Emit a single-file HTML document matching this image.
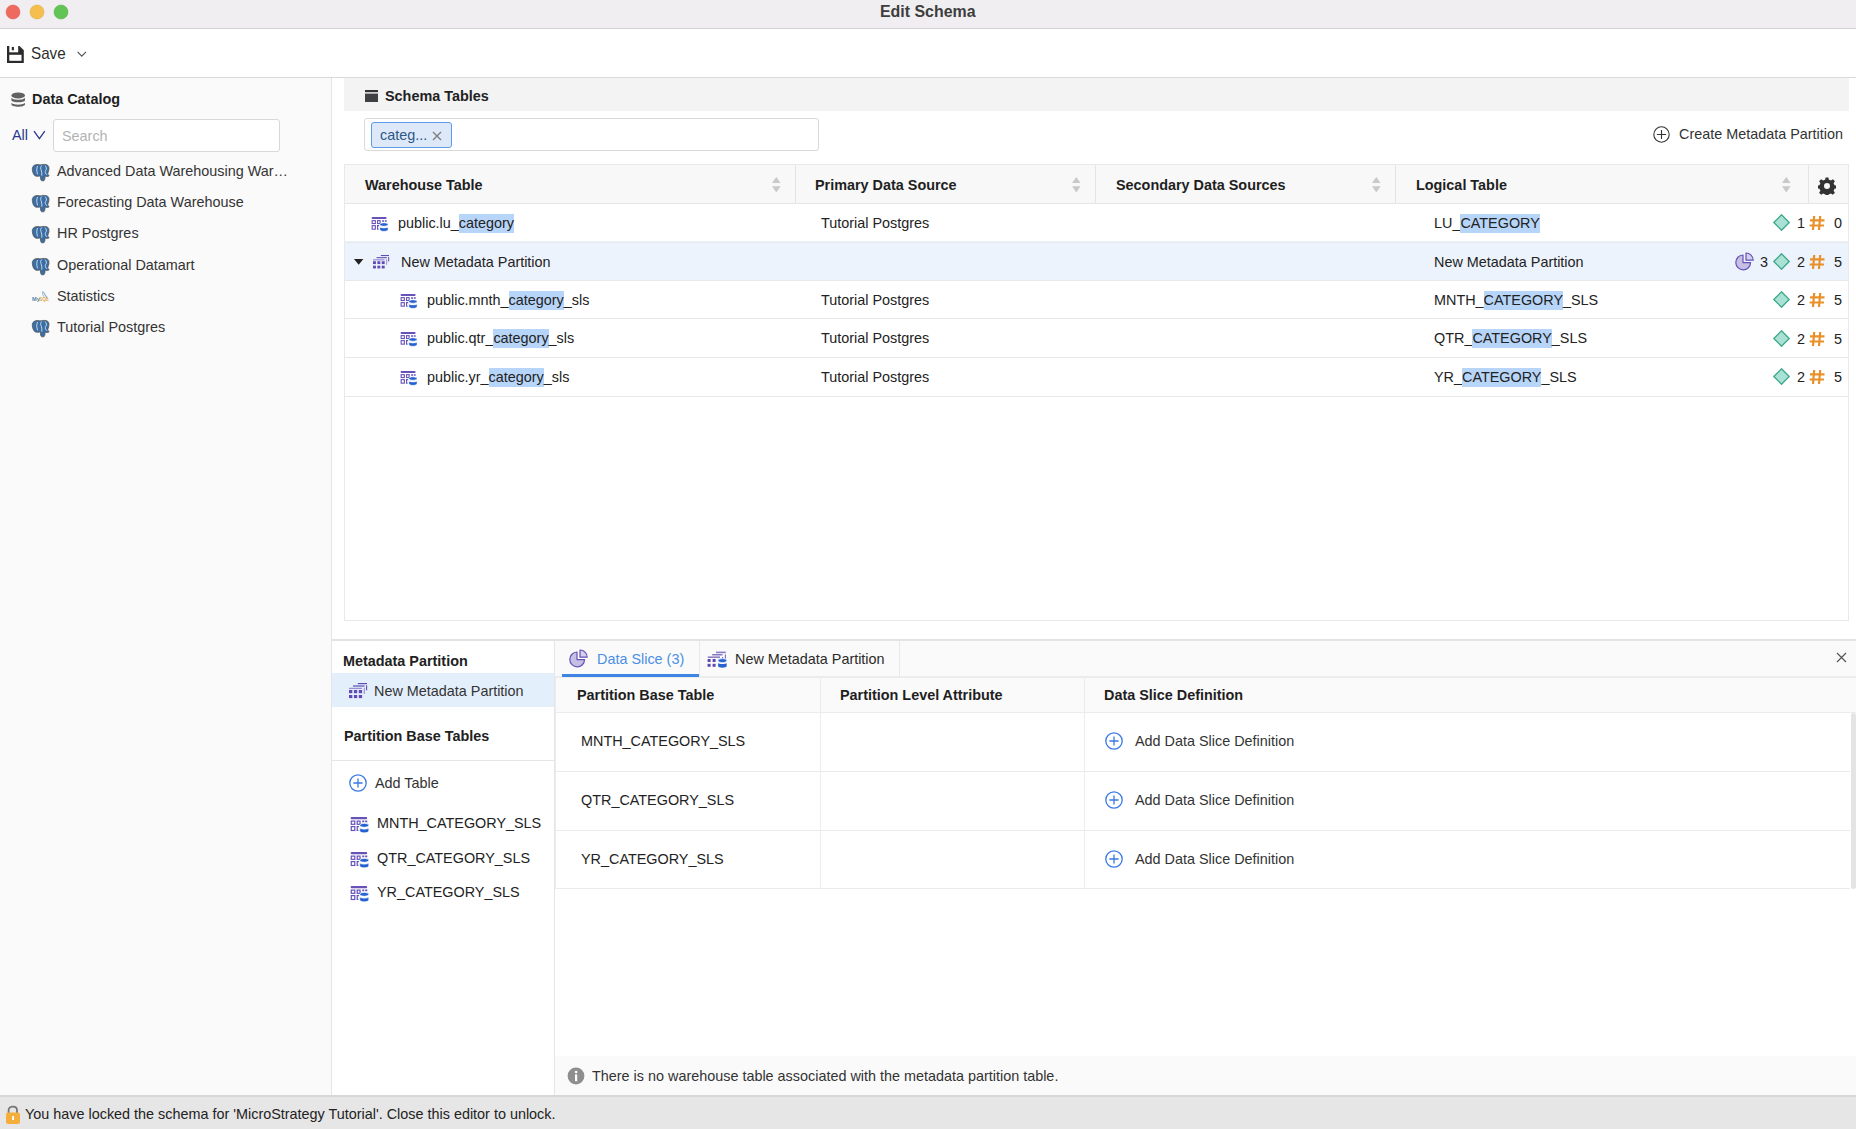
<!DOCTYPE html>
<html><head><meta charset="utf-8"><title>Edit Schema</title>
<style>
html,body{margin:0;padding:0;}
body{width:1856px;height:1129px;position:relative;overflow:hidden;background:#fff;font-family:"Liberation Sans", sans-serif;}
.a{position:absolute;box-sizing:border-box;}
svg.a{overflow:visible}
.t{position:absolute;white-space:nowrap;line-height:20px;font-family:"Liberation Sans", sans-serif;}
</style></head><body>
<div class="a" style="left:0px;top:0px;width:1856px;height:28px;background:#f0eef0;"></div>
<div class="a" style="left:0px;top:28px;width:1856px;height:1px;background:#d3d2d3;"></div>
<svg class="a" style="left:5px;top:4px" width="16" height="16" viewBox="0 0 16 16"><circle cx="8" cy="8" r="7" fill="#ee6a5f" stroke="#e0564b" stroke-width="0.5"/></svg>
<svg class="a" style="left:29px;top:4px" width="16" height="16" viewBox="0 0 16 16"><circle cx="8" cy="8" r="7" fill="#f5bf4f" stroke="#dea337" stroke-width="0.5"/></svg>
<svg class="a" style="left:53px;top:4px" width="16" height="16" viewBox="0 0 16 16"><circle cx="8" cy="8" r="7" fill="#61c454" stroke="#4eaa42" stroke-width="0.5"/></svg>
<div class="t" style="left:880px;top:1px;font-size:17.4px;font-weight:700;color:#3d3d3d;transform:scaleX(0.915);transform-origin:0 0;">Edit Schema</div>
<div class="a" style="left:0px;top:29px;width:1856px;height:48px;background:#ffffff;"></div>
<div class="a" style="left:0px;top:77px;width:1856px;height:1px;background:#d9d9d9;"></div>
<svg class="a" style="left:7px;top:45.5px" width="17" height="17" viewBox="0 0 17 17"><path d="M0 0 H12.5 L16.8 4.2 V16.9 H0 Z" fill="#2b2b2b"/><rect x="2.3" y="0" width="8.9" height="6.3" fill="#fff"/><rect x="4.8" y="0.9" width="2.1" height="3.4" fill="#2b2b2b"/><rect x="2.3" y="8.8" width="12.2" height="6" fill="#fff"/></svg>
<div class="t" style="left:31px;top:44px;font-size:17px;color:#2e2e2e;transform:scaleX(0.895);transform-origin:0 0;">Save</div>
<svg class="a" style="left:77px;top:51px" width="10" height="7" viewBox="0 0 10 7"><path d="M0.6 0.8 L4.8 5.2 L9 0.8" fill="none" stroke="#555" stroke-width="1.2"/></svg>
<div class="a" style="left:0px;top:78px;width:331px;height:1017px;background:#fafafa;"></div>
<div class="a" style="left:331px;top:78px;width:2px;height:1017px;background:#e4e4e4;"></div>
<svg class="a" style="left:10.5px;top:92px" width="15" height="16" viewBox="0 0 15 16"><g fill="#626262"><ellipse cx="7.2" cy="3.4" rx="6.8" ry="3"/><path d="M0.4 5.6 C1 8.6 13.4 8.6 14 5.6 V8.2 C13.4 11 1 11 0.4 8.2 Z"/><path d="M0.4 10.6 C1 13.4 13.4 13.4 14 10.6 V12.6 C13.4 15.6 1 15.6 0.4 12.6 Z"/></g></svg>
<div class="t" style="left:32px;top:89px;font-size:14.4px;font-weight:700;color:#1e1e1e;">Data Catalog</div>
<div class="t" style="left:12px;top:125px;font-size:14.4px;color:#2b378f;">All</div>
<svg class="a" style="left:33px;top:130px" width="13" height="10" viewBox="0 0 13 10"><path d="M1 1.2 L6.4 8.6 L11.8 1.2" fill="none" stroke="#2b378f" stroke-width="1.3"/></svg>
<div class="a" style="left:53px;top:119px;width:227px;height:33px;background:#fff;border:1px solid #d8d8d8;border-radius:3px"></div>
<div class="t" style="left:62px;top:126px;font-size:14.4px;color:#b3b3b3;">Search</div>
<svg class="a" style="left:32px;top:164px" width="18" height="18" viewBox="0 0 18 18"><path d="M1 2.4 C2.4 0.6 5.4 0.2 8 0.9 C9.6 0.4 12.4 0.2 14.6 0.7 C16.6 1.3 17.3 3.2 16.9 5.6 C16.6 7.6 15.8 9 15.6 10.2 C16.4 10.6 17.2 11 16.8 12 C16.2 12.8 14.8 12.6 13.2 12 C13 13.8 12.9 15.6 12.2 16.4 C11.4 17.1 9.6 17 9 16.2 C8.4 15.2 8.6 13.2 8.4 11.8 C6.8 12.4 4.6 12.6 3 11.8 C1.4 10.8 0.4 7.6 0.3 5.2 C0.2 4 0.4 3.2 1 2.4 Z" fill="#3a6ea5" stroke="#555" stroke-width="0.8"/><path d="M5.6 2 C4.6 4 4.4 7 5.6 10.4 M9.8 1.4 C8.6 2.4 8.4 4.2 9 5.6 C9.6 7 10 9.4 9.8 11.6 M12.8 1.6 C14.6 2.6 15 5 13.6 6.6 C12.8 7.6 13.4 9.6 14.8 10.8" fill="none" stroke="#fff" stroke-width="0.85" opacity=".85"/></svg>
<div class="t" style="left:57px;top:161px;font-size:14.4px;color:#333;">Advanced Data Warehousing War…</div>
<svg class="a" style="left:32px;top:195px" width="18" height="18" viewBox="0 0 18 18"><path d="M1 2.4 C2.4 0.6 5.4 0.2 8 0.9 C9.6 0.4 12.4 0.2 14.6 0.7 C16.6 1.3 17.3 3.2 16.9 5.6 C16.6 7.6 15.8 9 15.6 10.2 C16.4 10.6 17.2 11 16.8 12 C16.2 12.8 14.8 12.6 13.2 12 C13 13.8 12.9 15.6 12.2 16.4 C11.4 17.1 9.6 17 9 16.2 C8.4 15.2 8.6 13.2 8.4 11.8 C6.8 12.4 4.6 12.6 3 11.8 C1.4 10.8 0.4 7.6 0.3 5.2 C0.2 4 0.4 3.2 1 2.4 Z" fill="#3a6ea5" stroke="#555" stroke-width="0.8"/><path d="M5.6 2 C4.6 4 4.4 7 5.6 10.4 M9.8 1.4 C8.6 2.4 8.4 4.2 9 5.6 C9.6 7 10 9.4 9.8 11.6 M12.8 1.6 C14.6 2.6 15 5 13.6 6.6 C12.8 7.6 13.4 9.6 14.8 10.8" fill="none" stroke="#fff" stroke-width="0.85" opacity=".85"/></svg>
<div class="t" style="left:57px;top:192px;font-size:14.4px;color:#333;">Forecasting Data Warehouse</div>
<svg class="a" style="left:32px;top:226px" width="18" height="18" viewBox="0 0 18 18"><path d="M1 2.4 C2.4 0.6 5.4 0.2 8 0.9 C9.6 0.4 12.4 0.2 14.6 0.7 C16.6 1.3 17.3 3.2 16.9 5.6 C16.6 7.6 15.8 9 15.6 10.2 C16.4 10.6 17.2 11 16.8 12 C16.2 12.8 14.8 12.6 13.2 12 C13 13.8 12.9 15.6 12.2 16.4 C11.4 17.1 9.6 17 9 16.2 C8.4 15.2 8.6 13.2 8.4 11.8 C6.8 12.4 4.6 12.6 3 11.8 C1.4 10.8 0.4 7.6 0.3 5.2 C0.2 4 0.4 3.2 1 2.4 Z" fill="#3a6ea5" stroke="#555" stroke-width="0.8"/><path d="M5.6 2 C4.6 4 4.4 7 5.6 10.4 M9.8 1.4 C8.6 2.4 8.4 4.2 9 5.6 C9.6 7 10 9.4 9.8 11.6 M12.8 1.6 C14.6 2.6 15 5 13.6 6.6 C12.8 7.6 13.4 9.6 14.8 10.8" fill="none" stroke="#fff" stroke-width="0.85" opacity=".85"/></svg>
<div class="t" style="left:57px;top:223px;font-size:14.4px;color:#333;">HR Postgres</div>
<svg class="a" style="left:32px;top:258px" width="18" height="18" viewBox="0 0 18 18"><path d="M1 2.4 C2.4 0.6 5.4 0.2 8 0.9 C9.6 0.4 12.4 0.2 14.6 0.7 C16.6 1.3 17.3 3.2 16.9 5.6 C16.6 7.6 15.8 9 15.6 10.2 C16.4 10.6 17.2 11 16.8 12 C16.2 12.8 14.8 12.6 13.2 12 C13 13.8 12.9 15.6 12.2 16.4 C11.4 17.1 9.6 17 9 16.2 C8.4 15.2 8.6 13.2 8.4 11.8 C6.8 12.4 4.6 12.6 3 11.8 C1.4 10.8 0.4 7.6 0.3 5.2 C0.2 4 0.4 3.2 1 2.4 Z" fill="#3a6ea5" stroke="#555" stroke-width="0.8"/><path d="M5.6 2 C4.6 4 4.4 7 5.6 10.4 M9.8 1.4 C8.6 2.4 8.4 4.2 9 5.6 C9.6 7 10 9.4 9.8 11.6 M12.8 1.6 C14.6 2.6 15 5 13.6 6.6 C12.8 7.6 13.4 9.6 14.8 10.8" fill="none" stroke="#fff" stroke-width="0.85" opacity=".85"/></svg>
<div class="t" style="left:57px;top:255px;font-size:14.4px;color:#333;">Operational Datamart</div>
<svg class="a" style="left:31px;top:290px" width="19" height="14" viewBox="0 0 19 14"><path d="M11 2 C12 1.6 13.2 2.6 13.6 4 C14.2 5.6 15.4 7 16.4 8 C16.8 8.4 17 8.8 16.6 9" fill="none" stroke="#8fb0cc" stroke-width="1.1"/><path d="M11.6 2.4 C11.6 4 12 5.6 12.8 6.8" fill="none" stroke="#9ab8d2" stroke-width="1"/><text x="1" y="11.4" font-family="Liberation Sans" font-size="5.6" font-weight="700" fill="#4f86b0">My</text><text x="8" y="11.2" font-family="Liberation Sans" font-size="4.8" font-weight="700" fill="#e4a647">SQL</text></svg>
<div class="t" style="left:57px;top:286px;font-size:14.4px;color:#333;">Statistics</div>
<svg class="a" style="left:32px;top:320px" width="18" height="18" viewBox="0 0 18 18"><path d="M1 2.4 C2.4 0.6 5.4 0.2 8 0.9 C9.6 0.4 12.4 0.2 14.6 0.7 C16.6 1.3 17.3 3.2 16.9 5.6 C16.6 7.6 15.8 9 15.6 10.2 C16.4 10.6 17.2 11 16.8 12 C16.2 12.8 14.8 12.6 13.2 12 C13 13.8 12.9 15.6 12.2 16.4 C11.4 17.1 9.6 17 9 16.2 C8.4 15.2 8.6 13.2 8.4 11.8 C6.8 12.4 4.6 12.6 3 11.8 C1.4 10.8 0.4 7.6 0.3 5.2 C0.2 4 0.4 3.2 1 2.4 Z" fill="#3a6ea5" stroke="#555" stroke-width="0.8"/><path d="M5.6 2 C4.6 4 4.4 7 5.6 10.4 M9.8 1.4 C8.6 2.4 8.4 4.2 9 5.6 C9.6 7 10 9.4 9.8 11.6 M12.8 1.6 C14.6 2.6 15 5 13.6 6.6 C12.8 7.6 13.4 9.6 14.8 10.8" fill="none" stroke="#fff" stroke-width="0.85" opacity=".85"/></svg>
<div class="t" style="left:57px;top:317px;font-size:14.4px;color:#333;">Tutorial Postgres</div>
<div class="a" style="left:332px;top:78px;width:1524px;height:561px;background:#ffffff;"></div>
<div class="a" style="left:344px;top:78px;width:1505px;height:33px;background:#f3f3f3;"></div>
<svg class="a" style="left:365px;top:90px" width="13" height="12" viewBox="0 0 13 12"><rect x="0" y="0" width="13" height="2.2" fill="#333"/><rect x="0" y="3.6" width="13" height="8.4" fill="#3f4044"/></svg>
<div class="t" style="left:385px;top:86px;font-size:14.4px;font-weight:700;color:#222;">Schema Tables</div>
<div class="a" style="left:364px;top:118px;width:455px;height:33px;background:#fff;border:1px solid #d9d9d9;border-radius:3px"></div>
<div class="a" style="left:371px;top:122px;width:81px;height:26px;background:#dde9f8;border:1.5px solid #5b9be8;border-radius:3px"></div>
<div class="t" style="left:380px;top:125px;font-size:14.4px;color:#2e5687;">categ...</div>
<svg class="a" style="left:432px;top:131px" width="10" height="10" viewBox="0 0 10 10"><path d="M1 1 L9 9 M9 1 L1 9" stroke="#7a7a7a" stroke-width="1.2"/></svg>
<svg class="a" style="left:1653px;top:126px" width="17" height="17" viewBox="0 0 17 17"><circle cx="8.5" cy="8.5" r="7.7" fill="none" stroke="#333" stroke-width="1.1"/><path d="M8.5 3.9000000000000004 V13.1 M3.9000000000000004 8.5 H13.1" stroke="#333" stroke-width="1.1"/></svg>
<div class="t" style="left:1679px;top:124px;font-size:14.4px;color:#333;">Create Metadata Partition</div>
<div class="a" style="left:344px;top:164px;width:1505px;height:457px;border:1px solid #e9e9e9;background:#fff"></div>
<div class="a" style="left:345px;top:165px;width:1503px;height:38px;background:#f8f8f8;"></div>
<div class="a" style="left:345px;top:203px;width:1503px;height:1px;background:#e6e6e6;"></div>
<div class="a" style="left:795px;top:165px;width:1px;height:38px;background:#e4e4e4;"></div>
<div class="a" style="left:1095px;top:165px;width:1px;height:38px;background:#e4e4e4;"></div>
<div class="a" style="left:1395px;top:165px;width:1px;height:38px;background:#e4e4e4;"></div>
<div class="a" style="left:1808px;top:165px;width:1px;height:38px;background:#e4e4e4;"></div>
<div class="t" style="left:365px;top:175px;font-size:14.4px;font-weight:700;color:#1f1f1f;">Warehouse Table</div>
<div class="t" style="left:815px;top:175px;font-size:14.4px;font-weight:700;color:#1f1f1f;">Primary Data Source</div>
<div class="t" style="left:1116px;top:175px;font-size:14.4px;font-weight:700;color:#1f1f1f;">Secondary Data Sources</div>
<div class="t" style="left:1416px;top:175px;font-size:14.4px;font-weight:700;color:#1f1f1f;">Logical Table</div>
<svg class="a" style="left:771.7px;top:177px" width="9" height="16" viewBox="0 0 9 16"><path d="M4.3 0 L8.6 6 H0 Z M0 9.2 H8.6 L4.3 15.6 Z" fill="#c9c9c9"/></svg>
<svg class="a" style="left:1071.7px;top:177px" width="9" height="16" viewBox="0 0 9 16"><path d="M4.3 0 L8.6 6 H0 Z M0 9.2 H8.6 L4.3 15.6 Z" fill="#c9c9c9"/></svg>
<svg class="a" style="left:1371.7px;top:177px" width="9" height="16" viewBox="0 0 9 16"><path d="M4.3 0 L8.6 6 H0 Z M0 9.2 H8.6 L4.3 15.6 Z" fill="#c9c9c9"/></svg>
<svg class="a" style="left:1781.7px;top:177px" width="9" height="16" viewBox="0 0 9 16"><path d="M4.3 0 L8.6 6 H0 Z M0 9.2 H8.6 L4.3 15.6 Z" fill="#c9c9c9"/></svg>
<svg class="a" style="left:1818px;top:177px" width="18" height="18" viewBox="0 0 18 18"><path fill="#333" d="M7.6 0.4 H10.4 L10.9 2.7 C11.6 2.9 12.3 3.2 12.9 3.6 L14.9 2.3 L16.9 4.3 L15.6 6.3 C16 6.9 16.3 7.6 16.5 8.3 L18 8.6 V11.4 L16.5 11.7 C16.3 12.4 16 13.1 15.6 13.7 L16.9 15.7 L14.9 17.7 L12.9 16.4 C12.3 16.8 11.6 17.1 10.9 17.3 L10.4 18 H7.6 L7.1 17.3 C6.4 17.1 5.7 16.8 5.1 16.4 L3.1 17.7 L1.1 15.7 L2.4 13.7 C2 13.1 1.7 12.4 1.5 11.7 L0 11.4 V8.6 L1.5 8.3 C1.7 7.6 2 6.9 2.4 6.3 L1.1 4.3 L3.1 2.3 L5.1 3.6 C5.7 3.2 6.4 2.9 7.1 2.7 Z M9 6 A3 3 0 1 0 9 12 A3 3 0 1 0 9 6 Z"/></svg>
<div class="a" style="left:345px;top:241px;width:1503px;height:39px;background:#edf3fc;"></div>
<div class="a" style="left:345px;top:242px;width:1503px;height:1px;background:#e8e8e8;"></div>
<div class="a" style="left:345px;top:280px;width:1503px;height:1px;background:#e8e8e8;"></div>
<div class="a" style="left:345px;top:318px;width:1503px;height:1px;background:#e8e8e8;"></div>
<div class="a" style="left:345px;top:357px;width:1503px;height:1px;background:#e8e8e8;"></div>
<div class="a" style="left:345px;top:396px;width:1503px;height:1px;background:#e8e8e8;"></div>
<svg class="a" style="left:371px;top:216px" width="18" height="16" viewBox="0 0 18 16"><g transform="scale(1.0)"><rect x="0.6" y="1" width="15" height="1.9" rx="0.9" fill="#6652b9"/><g fill="none" stroke="#6652b9" stroke-width="1.1"><rect x="1.15" y="4.65" width="3.2" height="2.9"/><rect x="6.55" y="4.65" width="2.6" height="2.9"/><rect x="1.15" y="9.65" width="3.2" height="3.5"/><path d="M8.2 9.65 H6.55 V13.15 H7.6"/></g><path d="M11.1 4.9 H13 M13.8 4.9 H15.7" stroke="#6652b9" stroke-width="1.5"/><ellipse cx="12.95" cy="8.5" rx="4.1" ry="1.8" fill="#2261cf" stroke="#fff" stroke-width="0.7"/><path d="M8.85 10.9 C9.4 12.3 16.5 12.3 17.05 10.9 V13.5 C17.05 15.9 8.85 15.9 8.85 13.5 Z" fill="#2261cf" stroke="#fff" stroke-width="0.5"/></g></svg>
<div class="t" style="left:398px;top:213px;font-size:14.4px;color:#222;">public.lu_<span style="background:#b7d5f8;box-shadow:0 2px 0 #b7d5f8,0 -1px 0 #b7d5f8">category</span></div>
<div class="t" style="left:821px;top:213px;font-size:14.4px;color:#222;">Tutorial Postgres</div>
<div class="t" style="left:1434px;top:213px;font-size:14.4px;color:#222;">LU_<span style="background:#b7d5f8;box-shadow:0 2px 0 #b7d5f8,0 -1px 0 #b7d5f8">CATEGORY</span></div>
<svg class="a" style="left:354px;top:259px" width="10" height="6" viewBox="0 0 10 6"><path d="M0 0 H9.4 L4.7 5.8 Z" fill="#222"/></svg>
<svg class="a" style="left:373px;top:255.3px" width="18" height="16" viewBox="0 0 18 16"><g transform="scale(0.89)"><path d="M8.8 0.6 H18" stroke="#5f4bb3" stroke-width="1.2"/><path d="M4 3 H15.6" stroke="#5f4bb3" stroke-width="1.2"/><path d="M0 5.4 H13" stroke="#9a8cd2" stroke-width="1.3"/><path d="M17.6 2.2 V7.2" stroke="#5f4bb3" stroke-width="1.1"/><path d="M15.3 4.8 V11" stroke="#9a8cd2" stroke-width="1.1"/><g fill="#5f4bb3"><rect x="0" y="7" width="3.3" height="3.2"/><rect x="4.9" y="7" width="3.3" height="3.2"/><rect x="9.8" y="7" width="3.3" height="3.2"/><rect x="0" y="12" width="3.3" height="3.1"/><rect x="4.9" y="12" width="3.3" height="3.1"/><rect x="9.8" y="12" width="3.3" height="3.1"/></g></g></svg>
<div class="t" style="left:401px;top:252px;font-size:14.4px;color:#222;">New Metadata Partition</div>
<div class="t" style="left:1434px;top:252px;font-size:14.4px;color:#222;">New Metadata Partition</div>
<svg class="a" style="left:400px;top:293px" width="18" height="16" viewBox="0 0 18 16"><g transform="scale(1.0)"><rect x="0.6" y="1" width="15" height="1.9" rx="0.9" fill="#6652b9"/><g fill="none" stroke="#6652b9" stroke-width="1.1"><rect x="1.15" y="4.65" width="3.2" height="2.9"/><rect x="6.55" y="4.65" width="2.6" height="2.9"/><rect x="1.15" y="9.65" width="3.2" height="3.5"/><path d="M8.2 9.65 H6.55 V13.15 H7.6"/></g><path d="M11.1 4.9 H13 M13.8 4.9 H15.7" stroke="#6652b9" stroke-width="1.5"/><ellipse cx="12.95" cy="8.5" rx="4.1" ry="1.8" fill="#2261cf" stroke="#fff" stroke-width="0.7"/><path d="M8.85 10.9 C9.4 12.3 16.5 12.3 17.05 10.9 V13.5 C17.05 15.9 8.85 15.9 8.85 13.5 Z" fill="#2261cf" stroke="#fff" stroke-width="0.5"/></g></svg>
<div class="t" style="left:427px;top:290px;font-size:14.4px;color:#222;">public.mnth_<span style="background:#b7d5f8;box-shadow:0 2px 0 #b7d5f8,0 -1px 0 #b7d5f8">category</span>_sls</div>
<div class="t" style="left:821px;top:290px;font-size:14.4px;color:#222;">Tutorial Postgres</div>
<div class="t" style="left:1434px;top:290px;font-size:14.4px;color:#222;">MNTH_<span style="background:#b7d5f8;box-shadow:0 2px 0 #b7d5f8,0 -1px 0 #b7d5f8">CATEGORY</span>_SLS</div>
<svg class="a" style="left:400px;top:331px" width="18" height="16" viewBox="0 0 18 16"><g transform="scale(1.0)"><rect x="0.6" y="1" width="15" height="1.9" rx="0.9" fill="#6652b9"/><g fill="none" stroke="#6652b9" stroke-width="1.1"><rect x="1.15" y="4.65" width="3.2" height="2.9"/><rect x="6.55" y="4.65" width="2.6" height="2.9"/><rect x="1.15" y="9.65" width="3.2" height="3.5"/><path d="M8.2 9.65 H6.55 V13.15 H7.6"/></g><path d="M11.1 4.9 H13 M13.8 4.9 H15.7" stroke="#6652b9" stroke-width="1.5"/><ellipse cx="12.95" cy="8.5" rx="4.1" ry="1.8" fill="#2261cf" stroke="#fff" stroke-width="0.7"/><path d="M8.85 10.9 C9.4 12.3 16.5 12.3 17.05 10.9 V13.5 C17.05 15.9 8.85 15.9 8.85 13.5 Z" fill="#2261cf" stroke="#fff" stroke-width="0.5"/></g></svg>
<div class="t" style="left:427px;top:328px;font-size:14.4px;color:#222;">public.qtr_<span style="background:#b7d5f8;box-shadow:0 2px 0 #b7d5f8,0 -1px 0 #b7d5f8">category</span>_sls</div>
<div class="t" style="left:821px;top:328px;font-size:14.4px;color:#222;">Tutorial Postgres</div>
<div class="t" style="left:1434px;top:328px;font-size:14.4px;color:#222;">QTR_<span style="background:#b7d5f8;box-shadow:0 2px 0 #b7d5f8,0 -1px 0 #b7d5f8">CATEGORY</span>_SLS</div>
<svg class="a" style="left:400px;top:370px" width="18" height="16" viewBox="0 0 18 16"><g transform="scale(1.0)"><rect x="0.6" y="1" width="15" height="1.9" rx="0.9" fill="#6652b9"/><g fill="none" stroke="#6652b9" stroke-width="1.1"><rect x="1.15" y="4.65" width="3.2" height="2.9"/><rect x="6.55" y="4.65" width="2.6" height="2.9"/><rect x="1.15" y="9.65" width="3.2" height="3.5"/><path d="M8.2 9.65 H6.55 V13.15 H7.6"/></g><path d="M11.1 4.9 H13 M13.8 4.9 H15.7" stroke="#6652b9" stroke-width="1.5"/><ellipse cx="12.95" cy="8.5" rx="4.1" ry="1.8" fill="#2261cf" stroke="#fff" stroke-width="0.7"/><path d="M8.85 10.9 C9.4 12.3 16.5 12.3 17.05 10.9 V13.5 C17.05 15.9 8.85 15.9 8.85 13.5 Z" fill="#2261cf" stroke="#fff" stroke-width="0.5"/></g></svg>
<div class="t" style="left:427px;top:367px;font-size:14.4px;color:#222;">public.yr_<span style="background:#b7d5f8;box-shadow:0 2px 0 #b7d5f8,0 -1px 0 #b7d5f8">category</span>_sls</div>
<div class="t" style="left:821px;top:367px;font-size:14.4px;color:#222;">Tutorial Postgres</div>
<div class="t" style="left:1434px;top:367px;font-size:14.4px;color:#222;">YR_<span style="background:#b7d5f8;box-shadow:0 2px 0 #b7d5f8,0 -1px 0 #b7d5f8">CATEGORY</span>_SLS</div>
<svg class="a" style="left:1773px;top:214px" width="17" height="17" viewBox="0 0 17 17"><path d="M8.5 0.8 L16.2 8.5 L8.5 16.2 L0.8 8.5 Z" fill="#a9e1d5" stroke="#3ea88b" stroke-width="1.3" stroke-linejoin="round"/></svg>
<div class="t" style="left:1797px;top:213px;font-size:14.4px;color:#222;">1</div>
<svg class="a" style="left:1809px;top:215px" width="16" height="16" viewBox="0 0 16 16"><g stroke="#e8912a" stroke-width="2.2" stroke-linecap="butt"><path d="M5.2 1 L4 15 M11.2 1 L10 15 M1 5.3 H15.5 M0.6 10.5 H15"/></g></svg>
<div class="t" style="left:1834px;top:213px;font-size:14.4px;color:#222;">0</div>
<svg class="a" style="left:1773px;top:253px" width="17" height="17" viewBox="0 0 17 17"><path d="M8.5 0.8 L16.2 8.5 L8.5 16.2 L0.8 8.5 Z" fill="#a9e1d5" stroke="#3ea88b" stroke-width="1.3" stroke-linejoin="round"/></svg>
<div class="t" style="left:1797px;top:252px;font-size:14.4px;color:#222;">2</div>
<svg class="a" style="left:1809px;top:254px" width="16" height="16" viewBox="0 0 16 16"><g stroke="#e8912a" stroke-width="2.2" stroke-linecap="butt"><path d="M5.2 1 L4 15 M11.2 1 L10 15 M1 5.3 H15.5 M0.6 10.5 H15"/></g></svg>
<div class="t" style="left:1834px;top:252px;font-size:14.4px;color:#222;">5</div>
<svg class="a" style="left:1773px;top:291px" width="17" height="17" viewBox="0 0 17 17"><path d="M8.5 0.8 L16.2 8.5 L8.5 16.2 L0.8 8.5 Z" fill="#a9e1d5" stroke="#3ea88b" stroke-width="1.3" stroke-linejoin="round"/></svg>
<div class="t" style="left:1797px;top:290px;font-size:14.4px;color:#222;">2</div>
<svg class="a" style="left:1809px;top:292px" width="16" height="16" viewBox="0 0 16 16"><g stroke="#e8912a" stroke-width="2.2" stroke-linecap="butt"><path d="M5.2 1 L4 15 M11.2 1 L10 15 M1 5.3 H15.5 M0.6 10.5 H15"/></g></svg>
<div class="t" style="left:1834px;top:290px;font-size:14.4px;color:#222;">5</div>
<svg class="a" style="left:1773px;top:330px" width="17" height="17" viewBox="0 0 17 17"><path d="M8.5 0.8 L16.2 8.5 L8.5 16.2 L0.8 8.5 Z" fill="#a9e1d5" stroke="#3ea88b" stroke-width="1.3" stroke-linejoin="round"/></svg>
<div class="t" style="left:1797px;top:329px;font-size:14.4px;color:#222;">2</div>
<svg class="a" style="left:1809px;top:331px" width="16" height="16" viewBox="0 0 16 16"><g stroke="#e8912a" stroke-width="2.2" stroke-linecap="butt"><path d="M5.2 1 L4 15 M11.2 1 L10 15 M1 5.3 H15.5 M0.6 10.5 H15"/></g></svg>
<div class="t" style="left:1834px;top:329px;font-size:14.4px;color:#222;">5</div>
<svg class="a" style="left:1773px;top:368px" width="17" height="17" viewBox="0 0 17 17"><path d="M8.5 0.8 L16.2 8.5 L8.5 16.2 L0.8 8.5 Z" fill="#a9e1d5" stroke="#3ea88b" stroke-width="1.3" stroke-linejoin="round"/></svg>
<div class="t" style="left:1797px;top:367px;font-size:14.4px;color:#222;">2</div>
<svg class="a" style="left:1809px;top:369px" width="16" height="16" viewBox="0 0 16 16"><g stroke="#e8912a" stroke-width="2.2" stroke-linecap="butt"><path d="M5.2 1 L4 15 M11.2 1 L10 15 M1 5.3 H15.5 M0.6 10.5 H15"/></g></svg>
<div class="t" style="left:1834px;top:367px;font-size:14.4px;color:#222;">5</div>
<svg class="a" style="left:1735px;top:252px" width="20" height="20" viewBox="0 0 20 20"><path d="M8 3 A7.4 7.4 0 1 0 15.6 10.6 H8 Z" fill="#c6bfe4" stroke="#6552b6" stroke-width="1.2" stroke-linejoin="round"/><path d="M11 1 A7.3 7.3 0 0 1 18.2 8.2 H11 Z" fill="#d6d0ee" stroke="#6552b6" stroke-width="1.2" stroke-linejoin="round"/></svg>
<div class="t" style="left:1760px;top:252px;font-size:14.4px;color:#222;">3</div>
<div class="a" style="left:332px;top:639px;width:1524px;height:2px;background:#e3e3e3;"></div>
<div class="a" style="left:332px;top:641px;width:222px;height:454px;background:#ffffff;"></div>
<div class="a" style="left:554px;top:641px;width:1px;height:454px;background:#e6e6e6;"></div>
<div class="t" style="left:343px;top:651px;font-size:14.4px;font-weight:700;color:#222;">Metadata Partition</div>
<div class="a" style="left:332px;top:673px;width:222px;height:34px;background:#e4effc;"></div>
<svg class="a" style="left:349px;top:683px" width="18" height="16" viewBox="0 0 18 16"><g transform="scale(1.0)"><path d="M8.8 0.6 H18" stroke="#5f4bb3" stroke-width="1.2"/><path d="M4 3 H15.6" stroke="#5f4bb3" stroke-width="1.2"/><path d="M0 5.4 H13" stroke="#9a8cd2" stroke-width="1.3"/><path d="M17.6 2.2 V7.2" stroke="#5f4bb3" stroke-width="1.1"/><path d="M15.3 4.8 V11" stroke="#9a8cd2" stroke-width="1.1"/><g fill="#5f4bb3"><rect x="0" y="7" width="3.3" height="3.2"/><rect x="4.9" y="7" width="3.3" height="3.2"/><rect x="9.8" y="7" width="3.3" height="3.2"/><rect x="0" y="12" width="3.3" height="3.1"/><rect x="4.9" y="12" width="3.3" height="3.1"/><rect x="9.8" y="12" width="3.3" height="3.1"/></g></g></svg>
<div class="t" style="left:374px;top:681px;font-size:14.4px;color:#333;">New Metadata Partition</div>
<div class="t" style="left:344px;top:726px;font-size:14.4px;font-weight:700;color:#222;">Partition Base Tables</div>
<div class="a" style="left:332px;top:760px;width:222px;height:1px;background:#e6e6e6;"></div>
<svg class="a" style="left:349px;top:774px" width="18" height="18" viewBox="0 0 18 18"><circle cx="9.0" cy="9.0" r="8.2" fill="none" stroke="#3a78e6" stroke-width="1.3"/><path d="M9.0 4.4 V13.6 M4.4 9.0 H13.6" stroke="#3a78e6" stroke-width="1.3"/></svg>
<div class="t" style="left:375px;top:773px;font-size:14.4px;color:#333;">Add Table</div>
<svg class="a" style="left:350px;top:816px" width="18" height="16" viewBox="0 0 18 16"><g transform="scale(1.1)"><rect x="0.6" y="1" width="15" height="1.9" rx="0.9" fill="#6652b9"/><g fill="none" stroke="#6652b9" stroke-width="1.1"><rect x="1.15" y="4.65" width="3.2" height="2.9"/><rect x="6.55" y="4.65" width="2.6" height="2.9"/><rect x="1.15" y="9.65" width="3.2" height="3.5"/><path d="M8.2 9.65 H6.55 V13.15 H7.6"/></g><path d="M11.1 4.9 H13 M13.8 4.9 H15.7" stroke="#6652b9" stroke-width="1.5"/><ellipse cx="12.95" cy="8.5" rx="4.1" ry="1.8" fill="#2261cf" stroke="#fff" stroke-width="0.7"/><path d="M8.85 10.9 C9.4 12.3 16.5 12.3 17.05 10.9 V13.5 C17.05 15.9 8.85 15.9 8.85 13.5 Z" fill="#2261cf" stroke="#fff" stroke-width="0.5"/></g></svg>
<div class="t" style="left:377px;top:813px;font-size:14.4px;color:#222;">MNTH_CATEGORY_SLS</div>
<svg class="a" style="left:350px;top:851px" width="18" height="16" viewBox="0 0 18 16"><g transform="scale(1.1)"><rect x="0.6" y="1" width="15" height="1.9" rx="0.9" fill="#6652b9"/><g fill="none" stroke="#6652b9" stroke-width="1.1"><rect x="1.15" y="4.65" width="3.2" height="2.9"/><rect x="6.55" y="4.65" width="2.6" height="2.9"/><rect x="1.15" y="9.65" width="3.2" height="3.5"/><path d="M8.2 9.65 H6.55 V13.15 H7.6"/></g><path d="M11.1 4.9 H13 M13.8 4.9 H15.7" stroke="#6652b9" stroke-width="1.5"/><ellipse cx="12.95" cy="8.5" rx="4.1" ry="1.8" fill="#2261cf" stroke="#fff" stroke-width="0.7"/><path d="M8.85 10.9 C9.4 12.3 16.5 12.3 17.05 10.9 V13.5 C17.05 15.9 8.85 15.9 8.85 13.5 Z" fill="#2261cf" stroke="#fff" stroke-width="0.5"/></g></svg>
<div class="t" style="left:377px;top:848px;font-size:14.4px;color:#222;">QTR_CATEGORY_SLS</div>
<svg class="a" style="left:350px;top:885px" width="18" height="16" viewBox="0 0 18 16"><g transform="scale(1.1)"><rect x="0.6" y="1" width="15" height="1.9" rx="0.9" fill="#6652b9"/><g fill="none" stroke="#6652b9" stroke-width="1.1"><rect x="1.15" y="4.65" width="3.2" height="2.9"/><rect x="6.55" y="4.65" width="2.6" height="2.9"/><rect x="1.15" y="9.65" width="3.2" height="3.5"/><path d="M8.2 9.65 H6.55 V13.15 H7.6"/></g><path d="M11.1 4.9 H13 M13.8 4.9 H15.7" stroke="#6652b9" stroke-width="1.5"/><ellipse cx="12.95" cy="8.5" rx="4.1" ry="1.8" fill="#2261cf" stroke="#fff" stroke-width="0.7"/><path d="M8.85 10.9 C9.4 12.3 16.5 12.3 17.05 10.9 V13.5 C17.05 15.9 8.85 15.9 8.85 13.5 Z" fill="#2261cf" stroke="#fff" stroke-width="0.5"/></g></svg>
<div class="t" style="left:377px;top:882px;font-size:14.4px;color:#222;">YR_CATEGORY_SLS</div>
<div class="a" style="left:555px;top:641px;width:1301px;height:35px;background:#fafafa;"></div>
<div class="a" style="left:555px;top:676px;width:1301px;height:2px;background:#ececec;"></div>
<svg class="a" style="left:569px;top:649px" width="20" height="20" viewBox="0 0 20 20"><path d="M8 3 A7.4 7.4 0 1 0 15.6 10.6 H8 Z" fill="#c6bfe4" stroke="#6552b6" stroke-width="1.2" stroke-linejoin="round"/><path d="M11 1 A7.3 7.3 0 0 1 18.2 8.2 H11 Z" fill="#d6d0ee" stroke="#6552b6" stroke-width="1.2" stroke-linejoin="round"/></svg>
<div class="t" style="left:597px;top:649px;font-size:14.4px;color:#4a8fe4;">Data Slice (3)</div>
<div class="a" style="left:562px;top:674px;width:137px;height:3px;background:#3d86e4;"></div>
<div class="a" style="left:699px;top:641px;width:1px;height:35px;background:#e9e9e9;"></div>
<svg class="a" style="left:707px;top:651px" width="21" height="18" viewBox="0 0 21 18"><path d="M9 1.4 H18.8" stroke="#5c48b0" stroke-width="1.6" opacity=".7"/><path d="M5.2 3.8 H15.5" stroke="#5c48b0" stroke-width="1.1"/><path d="M0.8 6.2 H13" stroke="#5c48b0" stroke-width="1.6" opacity=".7"/><path d="M18.4 3.4 V7.6 M15.6 6 V7.5" stroke="#5c48b0" stroke-width="1.1" opacity=".8"/><g fill="#5c48b0"><rect x="0.6" y="8" width="3" height="3"/><rect x="5.6" y="8" width="3" height="3"/><rect x="0.6" y="12.8" width="3" height="3"/><rect x="5.6" y="12.8" width="3" height="3"/></g><ellipse cx="15.4" cy="9.6" rx="4.3" ry="2" fill="#2563d0" stroke="#fff" stroke-width="0.6"/><path d="M11.1 12 C11.6 13.4 19.2 13.4 19.7 12 V15 C19.7 17.3 11.1 17.3 11.1 15 Z" fill="#2563d0"/></svg>
<div class="t" style="left:735px;top:649px;font-size:14.4px;color:#2a2a2a;">New Metadata Partition</div>
<div class="a" style="left:899px;top:641px;width:1px;height:35px;background:#e9e9e9;"></div>
<svg class="a" style="left:1836px;top:652px" width="11" height="11" viewBox="0 0 11 11"><path d="M1 1 L10 10 M10 1 L1 10" stroke="#555" stroke-width="1.2"/></svg>
<div class="a" style="left:555px;top:678px;width:1301px;height:34px;background:#fafafa;"></div>
<div class="a" style="left:555px;top:712px;width:1301px;height:1px;background:#ececec;"></div>
<div class="a" style="left:820px;top:677px;width:1px;height:212px;background:#ececec;"></div>
<div class="a" style="left:1084px;top:677px;width:1px;height:212px;background:#ececec;"></div>
<div class="a" style="left:555px;top:677px;width:1px;height:212px;background:#ececec;"></div>
<div class="t" style="left:577px;top:685px;font-size:14.4px;font-weight:700;color:#1f1f1f;">Partition Base Table</div>
<div class="t" style="left:840px;top:685px;font-size:14.4px;font-weight:700;color:#1f1f1f;">Partition Level Attribute</div>
<div class="t" style="left:1104px;top:685px;font-size:14.4px;font-weight:700;color:#1f1f1f;">Data Slice Definition</div>
<div class="a" style="left:555px;top:771px;width:1295px;height:1px;background:#ebebeb;"></div>
<div class="t" style="left:581px;top:731px;font-size:14.4px;color:#222;">MNTH_CATEGORY_SLS</div>
<svg class="a" style="left:1105px;top:732px" width="18" height="18" viewBox="0 0 18 18"><circle cx="9.0" cy="9.0" r="8.2" fill="none" stroke="#3a78e6" stroke-width="1.3"/><path d="M9.0 4.4 V13.6 M4.4 9.0 H13.6" stroke="#3a78e6" stroke-width="1.3"/></svg>
<div class="t" style="left:1135px;top:731px;font-size:14.4px;color:#333;">Add Data Slice Definition</div>
<div class="a" style="left:555px;top:830px;width:1295px;height:1px;background:#ebebeb;"></div>
<div class="t" style="left:581px;top:790px;font-size:14.4px;color:#222;">QTR_CATEGORY_SLS</div>
<svg class="a" style="left:1105px;top:791px" width="18" height="18" viewBox="0 0 18 18"><circle cx="9.0" cy="9.0" r="8.2" fill="none" stroke="#3a78e6" stroke-width="1.3"/><path d="M9.0 4.4 V13.6 M4.4 9.0 H13.6" stroke="#3a78e6" stroke-width="1.3"/></svg>
<div class="t" style="left:1135px;top:790px;font-size:14.4px;color:#333;">Add Data Slice Definition</div>
<div class="a" style="left:555px;top:888px;width:1295px;height:1px;background:#ebebeb;"></div>
<div class="t" style="left:581px;top:849px;font-size:14.4px;color:#222;">YR_CATEGORY_SLS</div>
<svg class="a" style="left:1105px;top:850px" width="18" height="18" viewBox="0 0 18 18"><circle cx="9.0" cy="9.0" r="8.2" fill="none" stroke="#3a78e6" stroke-width="1.3"/><path d="M9.0 4.4 V13.6 M4.4 9.0 H13.6" stroke="#3a78e6" stroke-width="1.3"/></svg>
<div class="t" style="left:1135px;top:849px;font-size:14.4px;color:#333;">Add Data Slice Definition</div>
<div class="a" style="left:1851px;top:713px;width:5px;height:176px;background:#e4e4e4;border-radius:3px"></div>
<div class="a" style="left:555px;top:1056px;width:1301px;height:39px;background:#fafafa;"></div>
<svg class="a" style="left:567px;top:1067px" width="18" height="18" viewBox="0 0 18 18"><circle cx="9" cy="9" r="8.4" fill="#8e8e8e"/><rect x="8" y="7.4" width="2.2" height="6.8" fill="#fff"/><circle cx="9.1" cy="5" r="1.3" fill="#fff"/></svg>
<div class="t" style="left:592px;top:1066px;font-size:14.4px;color:#333;">There is no warehouse table associated with the metadata partition table.</div>
<div class="a" style="left:0px;top:1095px;width:1856px;height:2px;background:#d7d7d7;"></div>
<div class="a" style="left:0px;top:1097px;width:1856px;height:32px;background:#e6e6e6;"></div>
<svg class="a" style="left:5px;top:1104px" width="16" height="21" viewBox="0 0 16 21"><path d="M3.6 9 V6 C3.6 1.4 12 1.4 12 6 V9" fill="none" stroke="#777" stroke-width="1.8"/><rect x="1" y="8.4" width="14" height="11.6" rx="2" fill="#f4ae3c"/><rect x="7.2" y="12" width="1.8" height="4" fill="#fff"/></svg>
<div class="t" style="left:25px;top:1104px;font-size:14.4px;color:#222;">You have locked the schema for 'MicroStrategy Tutorial'. Close this editor to unlock.</div>
</body></html>
